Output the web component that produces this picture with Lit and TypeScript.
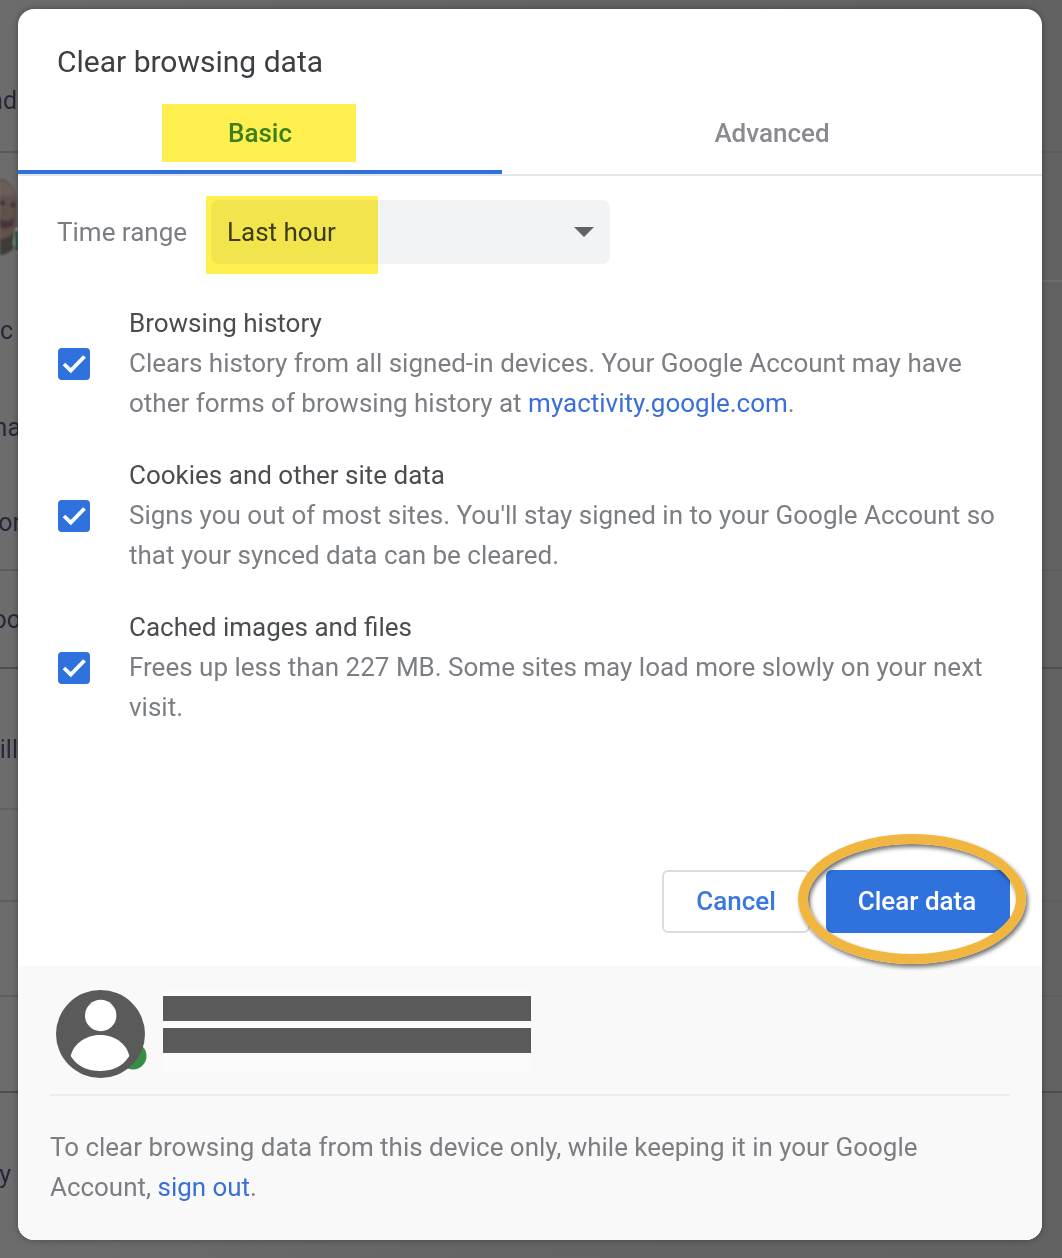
import { LitElement, html, css, svg } from "lit";
import { customElement } from "lit/decorators.js";

const BACK_ROWS = [
  { h: 153, pad: 50, text: "and", line: "#5a5a5a", shift: 1 },
  { h: 129, pad: 0, text: "", line: "#6d6d6d", photo: true, shift: 0 },
  { h: 98, pad: 0, text: "ic", line: "transparent", shift: 5 },
  { h: 96, pad: 0, text: "ina", line: "transparent", shift: -3 },
  { h: 95, pad: 0, text: "for", line: "#5c5c5c", shift: -3 },
  { h: 98, pad: 0, text: "oo", line: "#4e4e4e", shift: -3 },
  { h: 141, pad: 22, text: "Will", line: "#616161", shift: 0 },
  { h: 92, pad: 0, text: "", line: "#5e5e5e", shift: 0 },
  { h: 95, pad: 0, text: "", line: "#5e5e5e", shift: 0 },
  { h: 96, pad: 0, text: "", line: "#4c4c4c", shift: 0 },
  { h: 165, pad: 0, text: "y", line: "transparent", shift: 7 },
];

const ITEMS = [
  {
    title: "Browsing history",
    desc: html`Clears history from all signed-in devices. Your Google Account may have other forms of browsing history at <a href="#">myactivity.google.com</a>.`,
  },
  {
    title: "Cookies and other site data",
    desc: html`Signs you out of most sites. You'll stay signed in to your Google Account so that your synced data can be cleared.`,
  },
  {
    title: "Cached images and files",
    desc: html`Frees up less than 227 MB. Some sites may load more slowly on your next visit.`,
  },
];

const check = svg`<path d="M6 16 L12.8 22.5 L26.5 8.5" fill="none" stroke="#fff" stroke-width="3.8" />`;

@customElement("app-root")
export class AppRoot extends LitElement {
  static styles = css`
    :host {
      display: block;
      position: relative;
      width: 1062px;
      height: 1258px;
      overflow: hidden;
      background: linear-gradient(90deg, #6c6c6c 0, #646464 50%, #626262 100%);
      font-family: Roboto, "Liberation Sans", sans-serif;
      font-size: 26px;
      color: #3c4043;
    }
    .backdrop {
      position: absolute;
      inset: 0;
      display: flex;
      flex-direction: column;
    }
    .back-row {
      box-sizing: border-box;
      display: flex;
      align-items: center;
      border-bottom: 2px solid transparent;
    }
    .back-clip {
      width: 18px;
      display: flex;
      justify-content: flex-end;
      overflow: hidden;
    }
    .back-text {
      flex: none;
      color: #26283a;
      font-size: 25px;
      white-space: nowrap;
      filter: blur(0.6px);
    }
    .photo {
      width: 18px;
      height: 80px;
      display: block;
      filter: blur(1px);
    }
    .dialog {
      position: relative;
      box-sizing: border-box;
      width: 1024px;
      height: 1231px;
      margin: 0 0 0 18px;
      top: 9px;
      background: #fff;
      border-radius: 16px;
      overflow: hidden;
      display: flex;
      flex-direction: column;
      box-shadow: 0 0 6px rgba(0, 0, 0, 0.35);
    }
    .title {
      padding: 36px 0 0 39px;
      height: 51px;
      line-height: 34px;
      font-size: 30px;
      color: #3c4043;
    }
    .soft {
      filter: blur(0.6px);
    }
    .tabs {
      display: flex;
      height: 80px;
      box-sizing: border-box;
      border-bottom: 2px solid #e4e5e7;
    }
    .tab {
      flex: 1;
      box-sizing: border-box;
      display: flex;
      justify-content: center;
      padding-top: 8px;
      font-weight: 500;
      color: #898b8e;
    }
    .tab.active {
      flex: 0 0 484px;
      height: 78px;
      border-bottom: 4px solid #2f72de;
      color: #3b7f1e;
    }
    .tab-label {
      box-sizing: border-box;
      width: 194px;
      height: 58px;
      display: flex;
      align-items: center;
      justify-content: center;
    }
    .active .tab-label {
      background: #fff04f;
      margin-right: 2px;
      padding-left: 2px;
    }
    .range {
      display: flex;
      align-items: center;
      padding: 24px 0 0 39px;
    }
    .range-label {
      width: 154px;
      color: #7b7e82;
    }
    .select {
      position: relative;
      box-sizing: border-box;
      width: 399px;
      height: 64px;
      padding: 0 16px;
      display: flex;
      align-items: center;
      justify-content: space-between;
      background: #f1f3f4;
      border-radius: 8px;
      color: #3c4043;
    }
    .arrow {
      width: 0;
      height: 0;
      border-left: 10px solid transparent;
      border-right: 10px solid transparent;
      border-top: 10px solid #5f6368;
    }
    .mark {
      position: absolute;
      left: -5px;
      top: -4px;
      width: 172px;
      height: 78px;
      background: #fff04f;
      mix-blend-mode: multiply;
    }
    .items {
      display: flex;
      flex-direction: column;
      gap: 32px;
      padding: 39px 32px 0 40px;
    }
    .item {
      display: flex;
      align-items: center;
      gap: 39px;
      line-height: 40px;
    }
    .box {
      flex: none;
      width: 32px;
      height: 32px;
      margin-top: 2px;
      border-radius: 4px;
      background: #2f72de;
      display: block;
    }
    .item-title {
      color: #4a4d50;
    }
    .item-desc {
      color: #7b7e82;
    }
    a {
      color: #3b6fd8;
      text-decoration: none;
    }
    .spacer {
      flex: 1;
    }
    .actions {
      display: flex;
      justify-content: flex-end;
      gap: 16px;
      padding: 0 32px 33px 0;
    }
    .btn {
      box-sizing: border-box;
      height: 63px;
      padding-bottom: 2px;
      display: flex;
      align-items: center;
      justify-content: center;
      border-radius: 6px;
      font-weight: 500;
    }
    .btn.cancel {
      width: 148px;
      background: #fff;
      border: 2px solid #dadce0;
      color: #3b78de;
    }
    .btn.primary {
      position: relative;
      width: 184px;
      padding-right: 2px;
      background: #2f72de;
      color: #fff;
    }
    .ring {
      position: absolute;
      left: -28px;
      top: -36px;
      box-sizing: border-box;
      width: 228px;
      height: 130px;
      border: 10px solid #f0b63f;
      border-radius: 50%;
      box-shadow: 2px 3px 4px rgba(0, 0, 0, 0.55),
        inset 2px 3px 4px rgba(0, 0, 0, 0.55);
    }
    .footer {
      height: 274px;
      box-sizing: border-box;
      padding: 24px 32px 0;
      background: #f9f9f9;
    }
    .account {
      display: flex;
      gap: 15px;
      height: 88px;
      padding: 0 0 16px 6px;
      border-bottom: 2px solid #ececec;
    }
    .avatar {
      flex: none;
      width: 92px;
      height: 88px;
      display: block;
    }
    .redacted {
      display: flex;
      flex-direction: column;
      gap: 7px;
      height: 82px;
      box-sizing: border-box;
      padding-top: 6px;
      background: #fbfbfb;
    }
    .redacted div {
      width: 368px;
      height: 25px;
      background: #5a5a5a;
    }
    .note {
      margin: 31px 0 0;
      line-height: 40px;
      font-size: 25.95px;
      color: #7b7e82;
    }
  `;

  render() {
    return html`
      <div class="backdrop">
        ${BACK_ROWS.map(
          (r) => html`<div
            class="back-row"
            style="height:${r.h}px;padding-top:${r.pad}px;border-bottom-color:${r.line}"
          >
            ${r.photo
              ? html`<svg class="photo" viewBox="0 0 18 80">
                  <path d="M0 2 C8 2 15 10 17 24 V60 C14 72 8 78 0 78 Z" fill="#5f514b" />
                  <path d="M0 4 C7 4 13 10 15 20 L0 18 Z" fill="#6a5e56" />
                  <path d="M0 24 H5 L5 28 H0 Z M11 26 H15 V30 H11 Z" fill="#3d3533" />
                  <path d="M0 42 C6 46 11 44 14 40 L13 48 C9 52 3 52 0 50 Z" fill="#46343a" />
                  <path d="M0 62 C6 62 10 60 13 56 L15 70 C10 76 4 78 0 78 Z" fill="#3f3c37" />
                  <path d="M13 66 L15 52 L18 50 V76 L15 74 Z" fill="#a9aba5" />
                  <rect x="15" y="54" width="3" height="20" fill="#1d5a37" />
                </svg>`
              : html`<div class="back-clip">
                  <div class="back-text" style="margin-right:${r.shift}px">${r.text}</div>
                </div>`}
          </div>`
        )}
      </div>
      <div class="dialog">
        <div class="title"><span class="soft">Clear browsing data</span></div>
        <div class="tabs">
          <div class="tab active"><span class="tab-label"><span class="soft">Basic</span></span></div>
          <div class="tab"><span class="tab-label"><span class="soft">Advanced</span></span></div>
        </div>
        <div class="range">
          <div class="range-label soft">Time range</div>
          <div class="select">
            <span class="soft">Last hour</span>
            <span class="arrow"></span>
            <span class="mark"></span>
          </div>
        </div>
        <div class="items">
          ${ITEMS.map(
            (i) => html`<div class="item">
              <svg class="box" viewBox="0 0 32 32">${check}</svg>
              <div class="soft">
                <div class="item-title">${i.title}</div>
                <div class="item-desc">${i.desc}</div>
              </div>
            </div>`
          )}
        </div>
        <div class="spacer"></div>
        <div class="actions">
          <div class="btn cancel"><span class="soft">Cancel</span></div>
          <div class="btn primary"><span class="soft">Clear data</span><span class="ring"></span></div>
        </div>
        <div class="footer">
          <div class="account">
            <svg class="avatar" viewBox="0 0 92 88">
              <circle cx="77" cy="66" r="13.5" fill="#388e46" />
              <ellipse cx="44.5" cy="44" rx="44.5" ry="44" fill="#5a5a5a" />
              <circle cx="44.7" cy="25.5" r="15.7" fill="#fff" />
              <path d="M14.7 66 C18 52 32 45 44 45 C57 45 70 52 73.3 66 C66 78 54 81 44 81 C33 81 21 77 14.7 66 Z" fill="#fff" />
            </svg>
            <div class="redacted"><div></div><div></div></div>
          </div>
          <p class="note soft">
            To clear browsing data from this device only, while keeping it in your Google Account,
            <a href="#">sign out</a>.
          </p>
        </div>
      </div>
    `;
  }
}
